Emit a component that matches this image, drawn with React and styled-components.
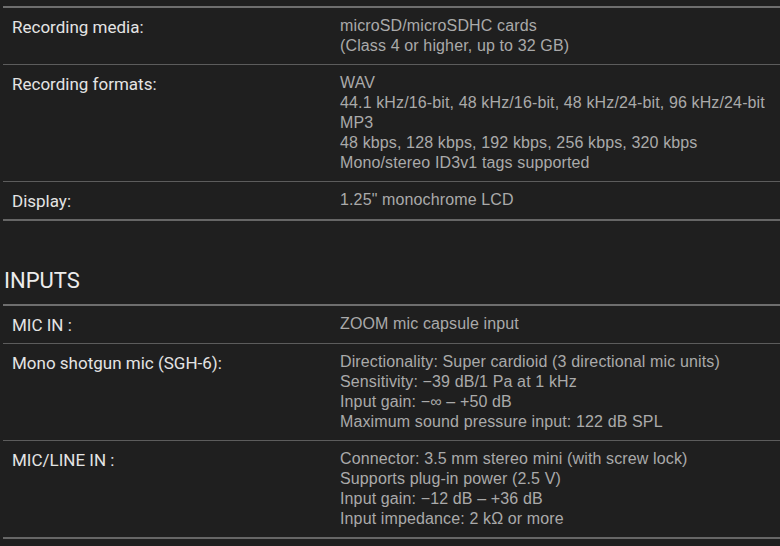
import React from "react";
import styled, { createGlobalStyle } from "styled-components";

const GlobalStyle = createGlobalStyle`
  html, body {
    margin: 0;
    padding: 0;
    background: #1f1f1f;
  }
  body {
    overflow: hidden;
  }
`;

const Page = styled.div`
  width: 780px;
  height: 546px;
  background: #1f1f1f;
  padding: 6px 0 0 3px;
  box-sizing: border-box;
  overflow: hidden;
`;

const Table = styled.div`
  width: 800px;
  border-top: 2px solid #6e6e6e;
`;

const Row = styled.div`
  display: grid;
  grid-template-columns: 337px 1fr;
  padding: 8px 0;
  border-bottom: 1px solid #5c5c5c;
  &:last-child {
    border-bottom: 2px solid #666;
  }
`;

const Label = styled.div`
  padding-left: 9px;
  padding-top: 1px;
  font-family: Roboto, "Noto Sans", sans-serif;
  font-size: 17px;
  line-height: 20px;
  color: #e4e4e4;
`;

const Value = styled.div`
  font-family: "Liberation Sans", Arial, sans-serif;
  font-size: 16px;
  line-height: 20px;
  letter-spacing: 0.13px;
  color: #aaaaaa;
  white-space: nowrap;
`;

const Line = styled.div``;

const Heading = styled.h2`
  margin: 0;
  padding: 48px 0 11px 1px;
  font-family: Roboto, "Noto Sans", sans-serif;
  font-weight: 400;
  font-size: 22px;
  line-height: 24px;
  color: #ececec;
`;

const general = [
  {
    label: "Recording media:",
    lines: ["microSD/microSDHC cards", "(Class 4 or higher, up to 32 GB)"],
  },
  {
    label: "Recording formats:",
    lines: [
      "WAV",
      "44.1 kHz/16-bit, 48 kHz/16-bit, 48 kHz/24-bit, 96 kHz/24-bit",
      "MP3",
      "48 kbps, 128 kbps, 192 kbps, 256 kbps, 320 kbps",
      "Mono/stereo ID3v1 tags supported",
    ],
  },
  { label: "Display:", lines: ["1.25\" monochrome LCD"] },
];

const inputs = [
  { label: "MIC IN :", lines: ["ZOOM mic capsule input"] },
  {
    label: "Mono shotgun mic (SGH-6):",
    lines: [
      "Directionality: Super cardioid (3 directional mic units)",
      "Sensitivity: \u221239 dB/1 Pa at 1 kHz",
      "Input gain: \u2212\u221e \u2013 +50 dB",
      "Maximum sound pressure input: 122 dB SPL",
    ],
  },
  {
    label: "MIC/LINE IN :",
    lines: [
      "Connector: 3.5 mm stereo mini (with screw lock)",
      "Supports plug-in power (2.5 V)",
      "Input gain: \u221212 dB \u2013 +36 dB",
      "Input impedance: 2 k\u03a9 or more",
    ],
  },
];

const SpecTable = ({ rows }) => (
  <Table>
    {rows.map((r) => (
      <Row key={r.label}>
        <Label>{r.label}</Label>
        <Value>
          {r.lines.map((l, i) => (
            <Line key={i}>{l}</Line>
          ))}
        </Value>
      </Row>
    ))}
  </Table>
);

export default function App() {
  return (
    <>
      <GlobalStyle />
      <Page>
        <SpecTable rows={general} />
        <Heading>INPUTS</Heading>
        <SpecTable rows={inputs} />
      </Page>
    </>
  );
}
